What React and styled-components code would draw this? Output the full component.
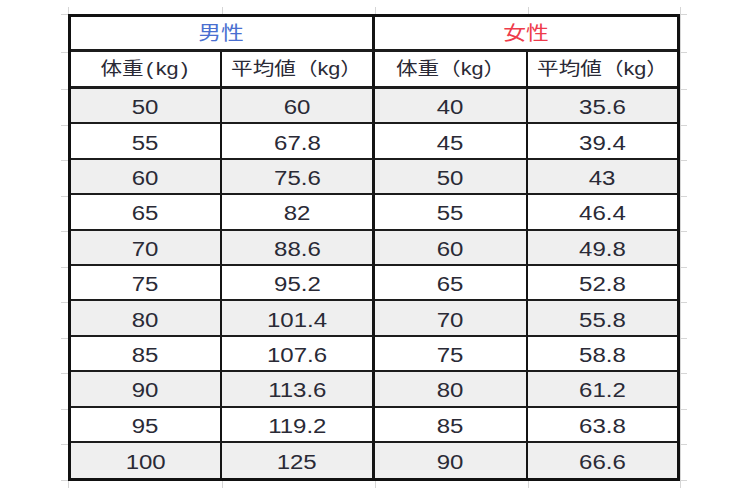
import React from "react";
import styled, { createGlobalStyle } from "styled-components";

const GlobalStyle = createGlobalStyle`
    html, body {
        margin: 0;
        background: #ffffff;
    }
    body {
        font-family: "Liberation Sans", "Noto Sans CJK JP", sans-serif;
        color: #2a2a36;
    }
`

const Page = styled.div`
    width: 750px;
    height: 500px;
    box-sizing: border-box;
    padding: 7px 0 0 61px;
`

// spreadsheet gridlines peeking out round the table
const Frame = styled.div`
    display: inline-block;
    padding: 7px;
    background: ${props => props.lines};
`

const Sheet = styled.div`
    display: grid;
    width: 612px;
    box-sizing: border-box;
    border: 3px solid #111;
    grid-template-columns: 151px 153px 153px 149px;
    grid-template-rows: 35px 37px repeat(11, 35.4px);
    background: #fff;
`

const Cell = styled.div`
    box-sizing: border-box;
    display: flex;
    align-items: center;
    justify-content: center;
    grid-column: span ${props => props.span || 1};
    border-right: ${props => props.right}px solid #141414;
    border-bottom: ${props => props.bottom}px solid #1c1c1c;
    background: ${props => props.shade ? "#efefef" : "#ffffff"};
    overflow: hidden;
`

const Text = styled.span`
    display: inline-block;
    font-size: ${props => props.size || 20}px;
    line-height: 1;
    color: ${props => props.color || "#2a2a36"};
    transform: scaleX(1.2);
    white-space: nowrap;
    padding-top: ${props => props.drop || 0}px;
`

// small gap so the half-width brackets sit like the sheet's
const Paren = styled.span`
    margin: 0 2px;
`

const men = [
    ["50", "60"], ["55", "67.8"], ["60", "75.6"], ["65", "82"], ["70", "88.6"], ["75", "95.2"],
    ["80", "101.4"], ["85", "107.6"], ["90", "113.6"], ["95", "119.2"], ["100", "125"],
]
const women = [
    ["40", "35.6"], ["45", "39.4"], ["50", "43"], ["55", "46.4"], ["60", "49.8"], ["65", "52.8"],
    ["70", "55.8"], ["75", "58.8"], ["80", "61.2"], ["85", "63.8"], ["90", "66.6"],
]

const rightBorders = [2, 3, 2, 0]

function gridLines () {
    const xs = [7, 161, 314, 467, 619]
    const ys = [7, 45, 82]
    for (let i = 1; i <= 11; i++) ys.push(82 + i * 35.5)
    const c = "#d6d6d6"
    const v = xs.map(x => `linear-gradient(${c},${c}) ${x}px 0 / 1px 100% no-repeat`)
    const h = ys.map(y => `linear-gradient(${c},${c}) 0 ${y}px / 100% 1px no-repeat`)
    return [...v, ...h].join(", ")
}

export default function App () {
    const heads = [
        <>体重<Paren>(</Paren>kg<Paren>)</Paren></>,
        "平均値（kg）",
        "体重（kg）",
        "平均値（kg）",
    ]

    return (
        <Page>
            <GlobalStyle />
            <Frame lines={gridLines()}>
                <Sheet>
                    <Cell span={2} right={3} bottom={3}>
                        <Text size={19} color="#4a6fd0">男性</Text>
                    </Cell>
                    <Cell span={2} right={0} bottom={3}>
                        <Text size={19} color="#ee3b4b">女性</Text>
                    </Cell>
                    {heads.map((h, i) => (
                        <Cell key={i} right={rightBorders[i]} bottom={3}>
                            <Text size={18}>{h}</Text>
                        </Cell>
                    ))}
                    {men.map((row, r) => {
                        const vals = [...row, ...women[r]]
                        const last = r === men.length - 1
                        return vals.map((v, i) => (
                            <Cell key={r + "-" + i} right={rightBorders[i]} bottom={last ? 0 : 2} shade={r % 2 === 0}>
                                <Text drop={3}>{v}</Text>
                            </Cell>
                        ))
                    })}
                </Sheet>
            </Frame>
        </Page>
    )
}
